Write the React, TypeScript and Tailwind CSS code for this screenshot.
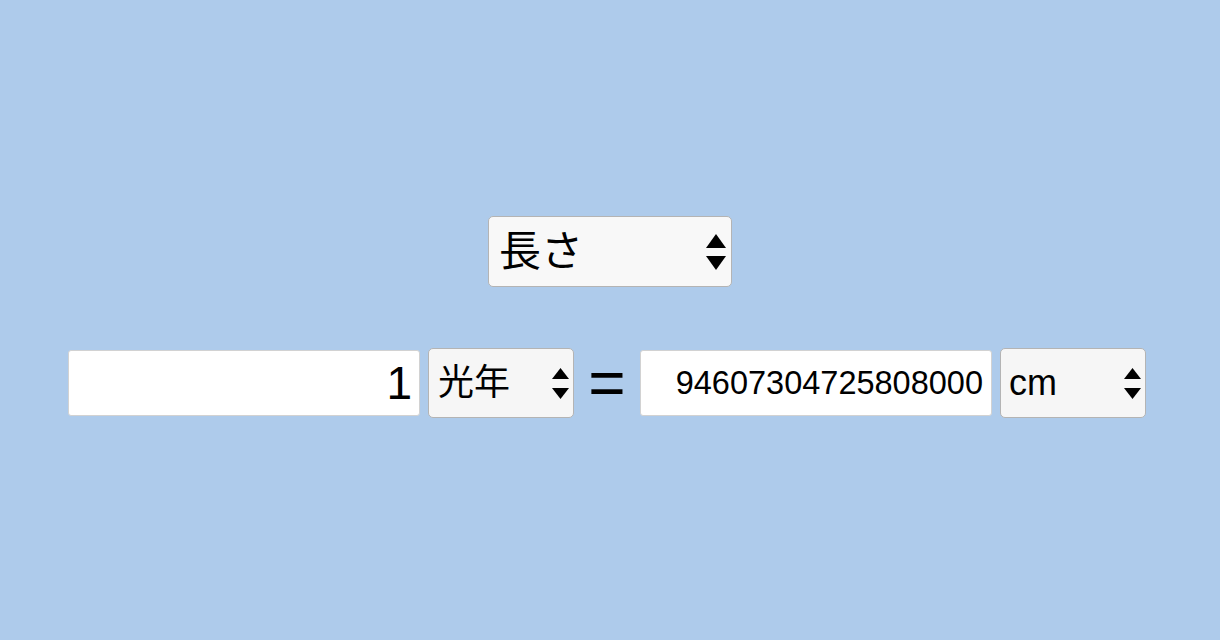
import React from "react";

function Arrows({ w, h, gap }: { w: number; h: number; gap: number }) {
  return (
    <svg width={w} height={h * 2 + gap} viewBox={`0 0 ${w} ${h * 2 + gap}`} className="shrink-0">
      <polygon points={`${w / 2},0 ${w},${h} 0,${h}`} fill="#000" />
      <polygon points={`0,${h + gap} ${w},${h + gap} ${w / 2},${h * 2 + gap}`} fill="#000" />
    </svg>
  );
}

export default function App() {
  const font = { fontFamily: '"Liberation Sans", Arial, "Noto Sans CJK JP", sans-serif' };
  return (
    <div
      className="w-full h-[640px] bg-[#aecbeb] flex flex-col items-center pt-[216px]"
      style={font}
    >
      <div className="w-[244px] h-[71px] bg-[#f8f8f8] border border-[#b4b4b4] rounded-[5px] flex items-center justify-between pl-[10px] pr-[5px]">
        <span className="text-[42px] leading-none text-black">長さ</span>
        <Arrows w={20} h={14} gap={8} />
      </div>

      <div className="mt-[61px] flex items-center ml-[-6px]">
        <div className="w-[352px] h-[66px] bg-white border border-[#d2d2d2] rounded-[3px] flex items-center justify-end pr-[7px]">
          <span className="text-[46px] leading-none text-black">1</span>
        </div>
        <div className="ml-[8px] w-[146px] h-[70px] bg-[#f6f6f6] border border-[#b4b4b4] rounded-[5px] flex items-center justify-between pl-[9px] pr-[4px]">
          <span className="text-[36px] leading-none text-black">光年</span>
          <Arrows w={17} h={11} gap={9} />
        </div>
        <div className="w-[66px] h-[70px] flex items-center justify-center">
          <span className="text-[64px] font-normal leading-none text-black">=</span>
        </div>
        <div className="w-[352px] h-[66px] bg-white border border-[#d2d2d2] rounded-[3px] flex items-center justify-end pr-[8px]">
          <span className="text-[32.5px] leading-none text-black">94607304725808000</span>
        </div>
        <div className="ml-[8px] w-[146px] h-[70px] bg-[#f6f6f6] border border-[#b4b4b4] rounded-[5px] flex items-center justify-between pl-[8px] pr-[4px]">
          <span className="text-[36px] leading-none text-black">cm</span>
          <Arrows w={17} h={11} gap={9} />
        </div>
      </div>
    </div>
  );
}
